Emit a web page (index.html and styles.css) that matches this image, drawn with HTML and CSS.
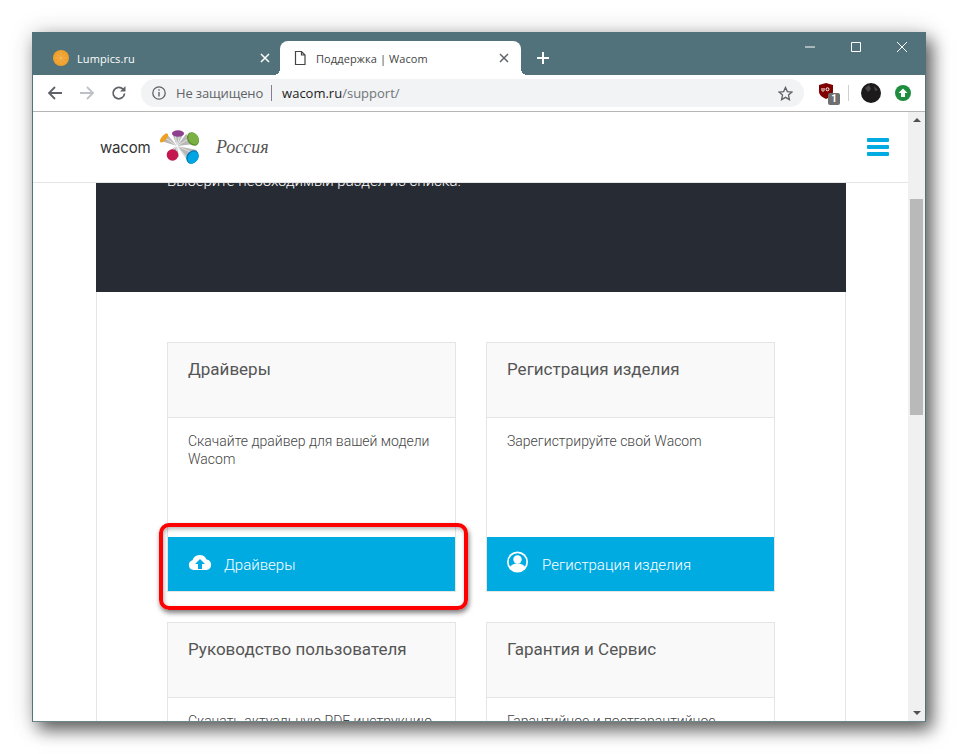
FILE: index.html

```html
<!DOCTYPE html>
<html lang="ru">
<head>
  <meta charset="UTF-8" />
  <title>Поддержка | Wacom</title>
  <link rel="stylesheet" href="styles.css">
</head>
<body>
  <div class="window">
    <div class="tabstrip">
      <div class="tab">
        <svg class="favicon" width="16" height="16" viewBox="0 0 16 16"><circle cx="8" cy="8" r="8" fill="#f0a02c"/><path d="M8 2v12M2 8h12M3.800 3.800l8.400 8.400M12.200 3.800l-8.400 8.400" stroke="#f6c070" stroke-width=".5"/></svg>
        <span class="tab-title">Lumpics.ru</span>
        <svg class="tab-close" width="10" height="10" viewBox="0 0 10 10"><path d="M1 1l8 8M9 1l-8 8" stroke="#fff" stroke-width="1.500"/></svg>
      </div>
      <div class="tab active">
        <svg class="favicon" width="16" height="16" viewBox="0 0 16 16"><path d="M3.500 1.500h6l3.500 3.500v9.500h-9.500zM9.500 1.500v3.500h3.500" fill="#fff" stroke="#444" stroke-width="1.200"/></svg>
        <span class="tab-title">Поддержка | Wacom</span>
        <svg class="tab-close" width="10" height="10" viewBox="0 0 10 10"><path d="M1 1l8 8M9 1l-8 8" stroke="#5f6368" stroke-width="1.500"/></svg>
      </div>
      <svg class="new-tab" width="12" height="12" viewBox="0 0 12 12"><path d="M6 0v12M0 6h12" stroke="#fff" stroke-width="2"/></svg>
      <div class="win-controls">
        <svg width="10" height="10" viewBox="0 0 10 10"><path d="M0 5h10" stroke="#fff"/></svg>
        <svg width="10" height="10" viewBox="0 0 10 10"><path d="M.5.5h9v9h-9z" fill="none" stroke="#fff"/></svg>
        <svg width="10" height="10" viewBox="0 0 10 10"><path d="M0 0l10 10M10 0L0 10" stroke="#fff"/></svg>
      </div>
    </div>

    <div class="toolbar">
      <svg width="16" height="16" viewBox="0 0 16 16"><path d="M15 8H2M8 2L2 8l6 6" fill="none" stroke="#5f6368" stroke-width="1.800"/></svg>
      <svg width="16" height="16" viewBox="0 0 16 16"><path d="M1 8h13M8 2l6 6-6 6" fill="none" stroke="#bdc1c6" stroke-width="1.800"/></svg>
      <svg width="16" height="16" viewBox="0 0 16 16"><path d="M13.500 8.500A5.700 5.700 0 1 1 12 4.200" fill="none" stroke="#5f6368" stroke-width="1.800"/><path d="M14.500 1v5.500H9z" fill="#5f6368"/></svg>
      <div class="omnibox">
        <svg width="14" height="14" viewBox="0 0 14 14"><circle cx="7" cy="7" r="6.200" fill="none" stroke="#5f6368" stroke-width="1.300"/><path d="M7 6v4.500M7 3.300v1.500" stroke="#5f6368" stroke-width="1.400"/></svg>
        <span class="not-secure">Не защищено</span>
        <span class="omni-sep"></span>
        <span class="url">wacom.ru<span class="url-path">/support/</span></span>
        <svg width="15" height="15" viewBox="0 0 16 16"><path d="M8 1.500l2 4.500 4.800.5-3.600 3.200 1 4.800L8 12.100l-4.200 2.400 1-4.800L1.200 6.500 6 6z" fill="none" stroke="#5f6368" stroke-width="1.400"/></svg>
      </div>
      <div class="extensions">
        <div class="ublock">
          <svg width="14" height="16" viewBox="0 0 14 16"><path d="M7 0l7 2v6.500c0 3.500-3 5.500-7 7.500-4-2-7-4-7-7.500V2z" fill="#800000"/><path d="M3 5v2.500c0 1 2 1 2 0V5" fill="none" stroke="#fff"/><circle cx="8.500" cy="6.300" r="1.500" fill="none" stroke="#fff"/></svg>
          <span class="ublock-badge">1</span>
        </div>
        <span class="ext-sep"></span>
        <svg width="20" height="20" viewBox="0 0 20 20"><circle cx="10" cy="10" r="10" fill="#1c1a1b"/><path d="M4 5l4-3 2 4-3 3zM13 3l4 4-3 1z" fill="#4a4546"/></svg>
        <svg class="ext-green" width="16" height="16" viewBox="0 0 16 16"><circle cx="8" cy="8" r="8" fill="#1e8e3e"/><path d="M8 3.500L12.500 8H10v4H6V8H3.500z" fill="#fff"/></svg>
      </div>
    </div>

    <div class="viewport">
      <div class="page">
        <header class="site-header">
          <span class="wordmark">wacom</span>
          <svg class="logo" width="42" height="38" viewBox="0 0 42 38">
            <path d="M18 17L2 12l5-8zM18 17L13 4h12zM18 17L27 5l9 10zM18 17l20 4-9 11zM18 17L20 28 8 23z" fill="#b8b8b8"/>
            <path d="M18 17L5 8M18 17L16 5M18 17L21 5M18 17L31 9M18 17L34 24M18 17L29 30M18 17L11 24M18 17L17 27" stroke="#fff" stroke-width=".6"/>
            <ellipse cx="5" cy="9" rx="2.500" ry="5.500" transform="rotate(40 5 9)" fill="#f0a020"/>
            <ellipse cx="19" cy="4.500" rx="6" ry="3.200" fill="#8e3f8e"/>
            <ellipse cx="34" cy="10" rx="5.500" ry="7.200" transform="rotate(-30 34 10)" fill="#5d8b2f"/>
            <ellipse cx="34.500" cy="9.500" rx="4.800" ry="6.400" transform="rotate(-30 34.500 9.500)" fill="#7bb042"/>
            <ellipse cx="33.500" cy="28" rx="5.800" ry="7.200" transform="rotate(35 33.500 28)" fill="#0079b5"/>
            <ellipse cx="34" cy="28.500" rx="4.900" ry="6.300" transform="rotate(35 34 28.500)" fill="#00a6e4"/>
            <circle cx="13.500" cy="26" r="5.800" fill="#c4174f"/>
          </svg>
          <span class="region">Россия</span>
          <div class="burger"><span></span><span></span><span></span></div>
        </header>

        <section class="hero">
          <p>Выберите необходимый раздел из списка.</p>
        </section>

        <main class="panel">
          <article class="card">
            <h3 class="card-head">Драйверы</h3>
            <div class="card-body">Скачайте драйвер для вашей модели Wacom</div>
            <a class="card-btn">
              <svg width="25" height="18" viewBox="-1 0 25 18"><path d="M5.500 17A5 5 0 0 1 4.500 7.200 7.500 7.500 0 0 1 18.500 6.500 5.300 5.300 0 0 1 18.500 17z" fill="#fff"/><path d="M12 6l5 5h-3v5h-4v-5H7z" fill="#00abe2"/></svg>
              Драйверы
              <span class="highlight"></span>
            </a>
          </article>
          <article class="card">
            <h3 class="card-head">Регистрация изделия</h3>
            <div class="card-body">Зарегистрируйте свой Wacom</div>
            <a class="card-btn">
              <svg width="24" height="22" viewBox="0 0 24 22"><circle cx="11.500" cy="11" r="10.500" fill="#fff"/><circle cx="11.500" cy="11" r="8.800" fill="#00abe2"/><circle cx="11.500" cy="8.500" r="4.200" fill="#fff"/><path d="M3.500 17c1-3 4-4.500 8-4.500s7 1.500 8 4.500a10 10 0 0 1-16 0z" fill="#fff"/></svg>
              Регистрация изделия
            </a>
          </article>
          <article class="card">
            <h3 class="card-head">Руководство пользователя</h3>
            <div class="card-body">Скачать актуальную PDF инструкцию</div>
          </article>
          <article class="card">
            <h3 class="card-head">Гарантия и Сервис</h3>
            <div class="card-body">Гарантийное и постгарантийное</div>
          </article>
        </main>
      </div>

      <div class="scrollbar">
        <span class="arrow up"></span>
        <div class="track"><div class="thumb"></div></div>
        <span class="arrow down"></span>
      </div>
    </div>
  </div>
</body>
</html>
```

FILE: styles.css

```css
* {
  box-sizing: border-box;
}

body {
  margin: 0;
  background-color: #fff;
  font-family: Roboto, 'Liberation Sans', sans-serif;
  height: 754px;
  overflow: hidden;
}

.window {
  margin: 32px 0 0 32px;
  width: 894px;
  height: 690px;
  border: 1px solid #51727a;
  border-bottom-color: #6b858b;
  background: #fff;
  display: flex;
  flex-direction: column;
  box-shadow: 6px 8px 16px rgba(0, 0, 0, 0.6), 0 0 24px rgba(0, 0, 0, 0.15);
}

/* tabs */
.tabstrip {
  height: 42px;
  flex: none;
  background: #51727a;
  display: flex;
  align-items: flex-end;
  padding-left: 8px;
  position: relative;
}

.tab {
  width: 239px;
  height: 34px;
  display: flex;
  align-items: center;
  padding: 0 10px 0 12px;
  color: #fff;
  font-size: 11px;
  letter-spacing: 0.1px;
  font-family: 'Open Sans', sans-serif;
  position: relative;
}

.tab.active {
  width: 241px;
  background: #fff;
  color: #444;
  border-radius: 8px 8px 0 0;
  padding: 0 12px;
}

.tab.active::before,
.tab.active::after {
  content: "";
  position: absolute;
  bottom: 0;
  width: 6px;
  height: 6px;
}

.tab.active::before {
  left: -6px;
  background: radial-gradient(circle at 0 0, transparent 6px, #fff 6px);
}

.tab.active::after {
  right: -6px;
  background: radial-gradient(circle at 100% 0, transparent 6px, #fff 6px);
}

.tab-title {
  margin-left: 8px;
  flex: 1;
}

.new-tab {
  margin: 0 0 11px 16px;
}

.win-controls {
  position: absolute;
  top: 9px;
  right: 18px;
  display: flex;
  gap: 36px;
}

/* toolbar */
.toolbar {
  height: 37px;
  flex: none;
  border-bottom: 1px solid #b5b5b5;
  display: flex;
  align-items: center;
  padding-left: 14px;
  gap: 16px;
}

.omnibox {
  width: 663px;
  height: 28px;
  margin-left: -2px;
  background: #f1f3f4;
  border-radius: 14px;
  display: flex;
  align-items: center;
  padding: 0 11px;
  font-size: 13px;
  font-family: 'Open Sans', sans-serif;
}

.not-secure {
  color: #5f6368;
  margin-left: 10px;
  letter-spacing: -0.15px;
}

.omni-sep {
  width: 1px;
  height: 16px;
  background: #8a7a95;
  margin: 0 10px 0 8px;
}

.url {
  color: #222;
  flex: 1;
}

.url-path {
  color: #70757a;
}

.extensions {
  display: flex;
  align-items: center;
  margin-left: -1px;
}

.ublock {
  position: relative;
  width: 21px;
  height: 22px;
  margin-top: 2px;
}

.ublock svg {
  display: block;
}

.ublock-badge {
  position: absolute;
  right: 0;
  bottom: 0;
  width: 12px;
  height: 12px;
  background: #6f6f6f;
  border-radius: 2px;
  color: #fff;
  font-size: 10px;
  font-weight: bold;
  line-height: 12px;
  text-align: center;
}

.ext-sep {
  width: 1px;
  height: 16px;
  background: #d0d0d0;
  margin: 0 12px 0 8px;
}

.ext-green {
  margin-left: 14px;
}

/* page */
.viewport {
  flex: 1;
  min-height: 0;
  display: flex;
}

.page {
  flex: 1;
  min-width: 0;
  overflow: hidden;
}

.site-header {
  height: 71px;
  border-bottom: 1px solid #e5e5e5;
  display: flex;
  align-items: center;
  padding: 0 19px 0 66px;
}

.wordmark {
  font-family: Inter, sans-serif;
  font-weight: 400;
  font-size: 15px;
  letter-spacing: -0.2px;
  color: #333;
  width: 60px;
  padding-left: 1px;
}

.logo {
  margin-top: 2px;
}

.region {
  font-family: 'Liberation Serif', serif;
  font-style: italic;
  font-size: 18px;
  color: #555;
  margin: 0 auto 0 15px;
}

.burger {
  width: 22px;
  display: flex;
  flex-direction: column;
  gap: 3px;
}

.burger span {
  height: 4px;
  border-radius: 1px;
  background: #00abe2;
}

.hero {
  width: 750px;
  height: 109px;
  margin-left: 63px;
  background: #272c34;
  overflow: hidden;
  display: flex;
  flex-direction: column;
  justify-content: flex-end;
  padding: 0 71px 101px;
}

.hero p {
  margin: 0;
  color: #fff;
  font-size: 15px;
  font-weight: 300;
  line-height: 20px;
  flex: none;
}

.panel {
  width: 750px;
  margin-left: 63px;
  border: 1px solid #e5e5e5;
  border-width: 0 1px;
  padding: 50px 70px 0;
  display: grid;
  grid-template-columns: 289px 289px;
  column-gap: 30px;
  row-gap: 30px;
}

.card {
  border: 1px solid #e5e5e5;
  height: 250px;
  display: flex;
  flex-direction: column;
}

.card-head {
  margin: 0;
  height: 75px;
  flex: none;
  background: #f9f9f9;
  border-bottom: 1px solid #e5e5e5;
  padding: 15px 20px 0;
  font-size: 17px;
  font-weight: 400;
  line-height: 22px;
  color: #555;
}

.card-body {
  flex: 1;
  padding: 14px 20px 0;
  font-size: 14px;
  font-weight: 300;
  line-height: 18px;
  color: #444;
}

.card-btn {
  height: 54px;
  flex: none;
  background: #00abe2;
  color: #fff;
  font-size: 15px;
  font-weight: 300;
  line-height: 20px;
  display: flex;
  align-items: center;
  gap: 12px;
  padding: 1px 0 0 19px;
  position: relative;
}

.card-btn svg {
  margin-top: -6px;
}

.highlight {
  position: absolute;
  top: -14px;
  left: -9px;
  right: -13px;
  bottom: -19px;
  border: 4px solid #f00;
  border-radius: 10px;
  box-shadow: 1px 3px 5px rgba(0, 0, 0, 0.5), inset 1px 2px 4px rgba(0, 0, 0, 0.3);
}

/* scrollbar */
.scrollbar {
  width: 17px;
  flex: none;
  background: #f0f0f0;
  display: flex;
  flex-direction: column;
  align-items: center;
}

.arrow {
  flex: none;
  width: 0;
  height: 0;
  margin: 6px 0;
  border-left: 4px solid transparent;
  border-right: 4px solid transparent;
}

.arrow.up {
  border-bottom: 4px solid #505050;
}

.arrow.down {
  border-top: 4px solid #505050;
}

.track {
  flex: 1;
  width: 100%;
  padding: 71px 2px 0;
}

.thumb {
  height: 216px;
  background: #b9b9b9;
}
```
